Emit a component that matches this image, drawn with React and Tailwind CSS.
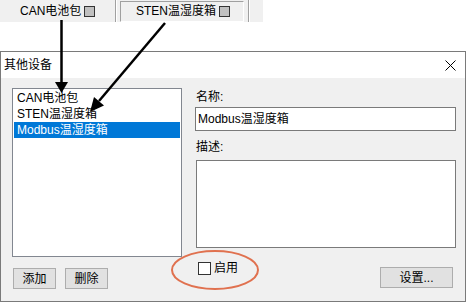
export default function App() {
  const items = ["CAN电池包", "STEN温湿度箱", "Modbus温湿度箱"];
  const selected = 2;

  return (
    <div
      className="relative w-[466px] h-[302px] bg-white overflow-hidden text-[12px] text-black"
      style={{ fontFamily: '"Liberation Sans", "Noto Sans CJK SC", sans-serif' }}
    >
      {/* top toolbar strip */}
      <div className="flex h-[22px] w-[263px] bg-[#f0f0f0] items-center">
        <div className="flex items-center pl-[20px] w-[115px]">
          <span className="leading-none">CAN电池包</span>
          <span className="ml-[3px] w-[11px] h-[11px] bg-[#c0c0c0] border border-[#333]" />
        </div>
        <div className="w-[1px] h-[22px] bg-[#a0a0a0]" />
        <div className="w-[1px] h-[22px] bg-white" />
        <div className="ml-[3px] flex items-center h-[21px] w-[124px] pl-[15px] border-l border-t border-[#a0a0a0] border-r border-r-white border-b border-b-white">
          <span className="leading-none">STEN温湿度箱</span>
          <span className="ml-[3px] w-[11px] h-[11px] bg-[#c0c0c0] border border-[#333]" />
        </div>
        <div className="ml-[4px] w-[1px] h-[22px] bg-[#a0a0a0]" />
        <div className="w-[1px] h-[22px] bg-white" />
      </div>

      <div className="h-[29px]" />

      {/* dialog */}
      <div className="w-[466px] h-[251px] border border-[#7a7a7a] flex flex-col">
        <div className="h-[26px] bg-white flex items-center justify-between pl-[3px] pr-[9px]">
          <span className="leading-none">其他设备</span>
          <svg width="11" height="11" viewBox="0 0 11 11">
            <path d="M0.5 0.5 L10.5 10.5 M10.5 0.5 L0.5 10.5" stroke="#000" strokeWidth="1" />
          </svg>
        </div>
        <div className="flex-1 bg-[#f0f0f0] flex pl-[11px] pt-[10px]">
          {/* left column */}
          <div className="w-[170px] flex flex-col">
            <div className="h-[169px] bg-white border border-[#828790] p-[1px]">
              {items.map((it, i) => (
                <div
                  key={i}
                  className={
                    "h-[16px] flex items-center pl-[3px] " +
                    (i === selected ? "bg-[#0078d7] text-white" : "")
                  }
                >
                  {it}
                </div>
              ))}
            </div>
            <div className="flex mt-[11px] ml-[1px] gap-[9px]">
              <button className="w-[43px] h-[21px] bg-[#e1e1e1] border border-[#adadad] flex items-center justify-center">
                添加
              </button>
              <button className="w-[43px] h-[21px] bg-[#e1e1e1] border border-[#adadad] flex items-center justify-center">
                删除
              </button>
            </div>
          </div>

          {/* right column */}
          <div className="ml-[13px] w-[261px] flex flex-col">
            <div className="h-[19px] flex items-center pl-[1px] pb-[1px]">名称:</div>
            <div className="h-[24px] bg-white border border-[#7a7a7a] flex items-center pl-[2px]">
              Modbus温湿度箱
            </div>
            <div className="h-[29px] flex items-center pl-[1px] pt-[2px]">描述:</div>
            <div className="h-[88px] bg-white border border-[#7a7a7a] ml-[1px]" />
            <div className="flex justify-between mt-[14px] h-[26px]">
              <div className="flex items-start ml-[3px]">
                <span className="w-[13px] h-[13px] bg-white border border-[#333]" />
                <span className="ml-[3px] leading-[13px]">启用</span>
              </div>
              <button className="self-end mr-[3px] w-[73px] h-[21px] bg-[#e1e1e1] border border-[#adadad] flex items-center justify-center">
                设置...
              </button>
            </div>
          </div>
        </div>
      </div>

      {/* annotation overlay */}
      <svg
        className="absolute top-0 left-0 pointer-events-none"
        width="466"
        height="302"
        viewBox="0 0 466 302"
      >
        <line x1="61.5" y1="20" x2="61.5" y2="83" stroke="#000" strokeWidth="2.5" />
        <polygon points="55,82 68,82 61.5,93" fill="#000" />
        <line x1="165" y1="23" x2="99" y2="101" stroke="#000" strokeWidth="2.5" />
        <polygon points="104,105.5 94,97 90,112" fill="#000" />
        <ellipse cx="215" cy="270" rx="43" ry="19" fill="none" stroke="#e0714f" strokeWidth="2" />
      </svg>
    </div>
  );
}
